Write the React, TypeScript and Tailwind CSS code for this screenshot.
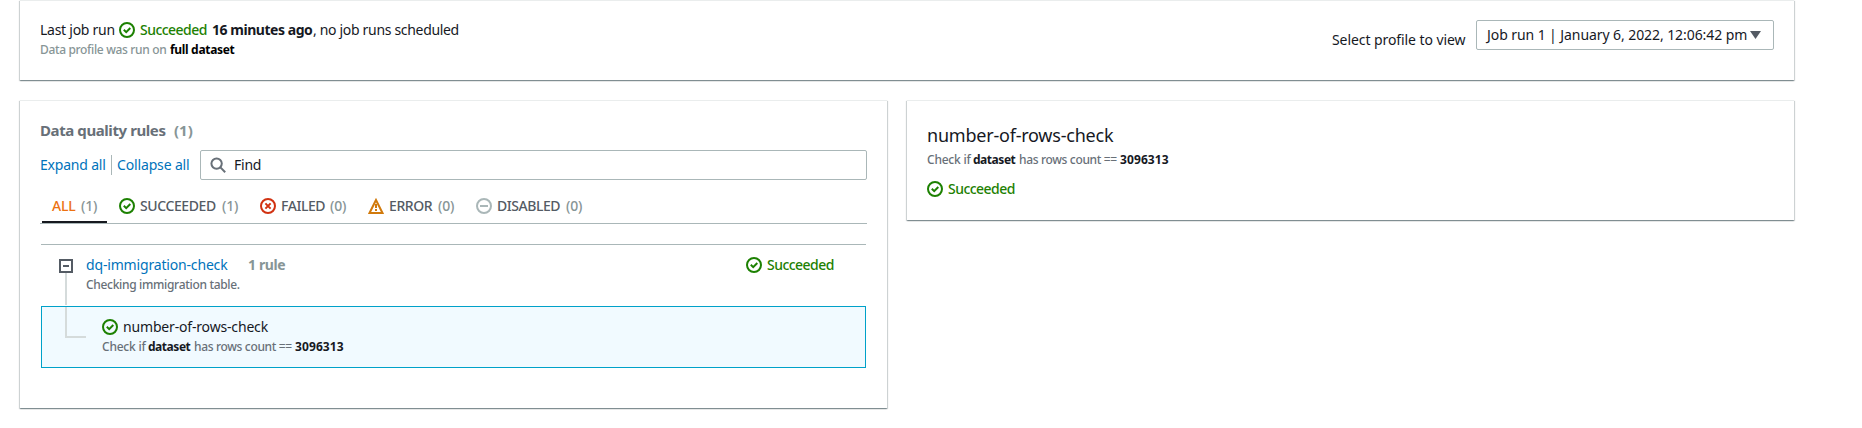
import type { ReactNode } from 'react';

function SuccessIcon() {
  return (
    <svg className="size-4 shrink-0" viewBox="0 0 16 16" fill="none" stroke="#1d8102" strokeWidth="2">
      <circle cx="8" cy="8" r="7" />
      <path d="M4.8 7.8 7.2 10.1 11.3 6" />
    </svg>
  );
}

function FailedIcon() {
  return (
    <svg className="size-4 shrink-0" viewBox="0 0 16 16" fill="none" stroke="#d13212" strokeWidth="2">
      <circle cx="8" cy="8" r="7" />
      <path d="m5.4 5.4 5.2 5.2M10.6 5.4l-5.2 5.2" />
    </svg>
  );
}

function WarningIcon() {
  return (
    <svg className="size-4 shrink-0" viewBox="0 0 16 16" fill="none" stroke="#d17a0c" strokeWidth="2">
      <path d="M8 2 1.5 15h13L8 2Z" strokeLinejoin="miter" />
      <path d="M8 6v4M8 11v2" />
    </svg>
  );
}

function DisabledIcon() {
  return (
    <svg className="size-4 shrink-0" viewBox="0 0 16 16" fill="none" stroke="#aab7b8" strokeWidth="2">
      <circle cx="8" cy="8" r="7" />
      <path d="M4 8h8" />
    </svg>
  );
}

function SearchIcon() {
  return (
    <svg className="size-4 shrink-0" viewBox="0 0 16 16" fill="none" stroke="#687078" strokeWidth="2">
      <circle cx="6.6" cy="6.6" r="5.2" />
      <path d="m10.4 10.4 4.8 4.8" />
    </svg>
  );
}

function Card({ className, children }: { className: string; children: ReactNode }) {
  return (
    <section
      className={`border-t border-[#eaeded] bg-white shadow-[0_1px_1px_0_rgba(0,28,36,0.3),1px_1px_1px_0_rgba(0,28,36,0.15),-1px_1px_1px_0_rgba(0,28,36,0.15)] ${className}`}
    >
      {children}
    </section>
  );
}

function Succeeded() {
  return (
    <span className="flex items-center text-[#1d8102]">
      <SuccessIcon />
      <span className="ml-[5px] w-[68px] font-medium tracking-[-0.54px]">Succeeded</span>
    </span>
  );
}

function RuleDescription() {
  return (
    <p className="flex text-xs leading-4 text-[#687078]">
      <span className="w-[46px] font-medium tracking-[-0.22px]">Check if</span>
      <b className="w-[46px] tracking-[-0.46px] text-[#16191f]">dataset</b>
      <span className="w-[101px] font-medium tracking-[-0.34px]">has rows count ==</span>
      <b className="tracking-[0.1px] text-[#16191f]">3096313</b>
    </p>
  );
}

function Count({ value }: { value: number }) {
  return <span className="font-medium tracking-[-0.2px] text-[#879596]">({value})</span>;
}

export default function App() {
  return (
    <div className="flex h-[428px] w-[1862px] flex-col gap-5 overflow-hidden bg-white pl-5 font-['Noto_Sans',sans-serif] text-sm leading-5 whitespace-nowrap text-[#16191f]">
      <Card className="flex h-20 w-[1774px] justify-between pl-5 pr-5">
        <div className="pt-[19px]">
          <div className="flex items-center">
            <span className="w-[79px] tracking-[-0.26px]">Last job run</span>
            <Succeeded />
            <b className="ml-[4px] w-[101px] tracking-[-0.46px]">16 minutes ago</b>
            <span className="tracking-[-0.32px]">, no job runs scheduled</span>
          </div>
          <p className="flex pt-[2px] text-xs leading-4 text-[#879596]">
            <span className="w-[130px] font-medium tracking-[-0.34px]">Data profile was run on</span>
            <b className="tracking-[-0.32px] text-black">full dataset</b>
          </p>
        </div>
        <div className="flex items-start pt-[19px]">
          <span className="mt-[10px] w-[144px] tracking-[-0.08px]">Select profile to view</span>
          <button className="flex h-[30px] w-[298px] items-center rounded-[2px] border border-[#aab7b8] pl-2.5">
            <span className="w-[263px] text-left tracking-[-0.08px]">Job run 1 | January 6, 2022, 12:06:42 pm</span>
            <svg className="h-2 w-[11px]" viewBox="0 0 11 8" fill="#545b64">
              <path d="M0 0h11L5.5 8Z" />
            </svg>
          </button>
        </div>
      </Card>

      <div className="flex items-start gap-5">
        <Card className="h-[308px] w-[867px] pl-5 pr-5">
          <h2 className="flex pt-[19px] text-[15px] leading-5 font-bold">
            <span className="w-[134px] tracking-[-0.41px] text-[#687078]">Data quality rules</span>
            <span className="text-[#879596]">(1)</span>
          </h2>
          <div className="mt-[10px] flex h-[30px] items-center">
            <a className="w-[71px] tracking-[-0.2px] text-[#0073bb]">Expand all</a>
            <span className="h-5 w-px bg-[#aab7b8]" />
            <a className="ml-[5px] w-[83px] tracking-[-0.15px] text-[#0073bb]">Collapse all</a>
            <div className="flex h-[30px] grow items-center rounded-[2px] border border-[#aab7b8] pl-[9px]">
              <SearchIcon />
              <span className="ml-2 tracking-[-0.25px]">Find</span>
            </div>
          </div>
          <nav className="mt-[16px] flex h-[28px] items-start border-b border-[#aab7b8] text-[#545b64]">
            <div className="ml-[2px] flex h-[27px] w-[65px] border-b-2 border-[#16191f] pl-[10px]">
              <span className="w-[29px] font-medium tracking-[-0.2px] text-[#ec7211]">ALL</span>
              <Count value={1} />
            </div>
            <div className="ml-3 flex w-[141px] items-center">
              <SuccessIcon />
              <span className="ml-[5px] w-[82px] font-medium tracking-[-0.4px]">SUCCEEDED</span>
              <Count value={1} />
            </div>
            <div className="flex w-[108px] items-center">
              <FailedIcon />
              <span className="ml-[5px] w-[49px] font-medium tracking-[-0.45px]">FAILED</span>
              <Count value={0} />
            </div>
            <div className="flex w-[108px] items-center">
              <WarningIcon />
              <span className="ml-[5px] w-[49px] font-medium tracking-[-0.4px]">ERROR</span>
              <Count value={0} />
            </div>
            <div className="flex items-center">
              <DisabledIcon />
              <span className="ml-[5px] w-[69px] font-medium tracking-[-0.45px]">DISABLED</span>
              <Count value={0} />
            </div>
          </nav>

          <div className="mt-5 mr-px ml-px border-t border-[#aab7b8]">
            <div className="flex h-[60px]">
              <div className="flex w-[45px] flex-col pt-[14px] pl-[18px]">
                <svg className="size-[14px] shrink-0" viewBox="0 0 14 14" fill="none" stroke="#545b64" strokeWidth="2">
                  <rect x="1" y="1" width="12" height="12" />
                  <path d="M4 7h6" />
                </svg>
                <span className="ml-[6px] w-[2px] grow bg-[#d5dbdb]" />
              </div>
              <div className="grow pt-[10px]">
                <div className="flex">
                  <a className="w-[162px] tracking-[-0.17px] text-[#0073bb]">dq-immigration-check</a>
                  <b className="tracking-[-0.38px] text-[#879596]">1 rule</b>
                </div>
                <p className="pt-[2px] text-xs leading-4 font-medium tracking-[-0.32px] text-[#687078]">
                  Checking immigration table.
                </p>
              </div>
              <div className="pt-[10px] pr-[31px]">
                <Succeeded />
              </div>
            </div>
            <div className="mt-px flex h-[62px] border border-[#00a1c9] bg-[#f1faff]">
              <span className="ml-[23px] h-[31px] w-[21px] border-b-2 border-l-2 border-[#d5dbdb]" />
              <div className="ml-4 pt-[10px]">
                <div className="flex items-center">
                  <SuccessIcon />
                  <span className="ml-[5px] tracking-[-0.17px]">number-of-rows-check</span>
                </div>
                <div className="pt-[2px]">
                  <RuleDescription />
                </div>
              </div>
            </div>
          </div>
        </Card>

        <Card className="h-[120px] w-[887px] pl-5">
          <h3 className="pt-[22px] text-lg leading-6 tracking-[-0.22px]">number-of-rows-check</h3>
          <div className="pt-[5px]">
            <RuleDescription />
          </div>
          <div className="pt-[11px]">
            <Succeeded />
          </div>
        </Card>
      </div>
    </div>
  );
}
